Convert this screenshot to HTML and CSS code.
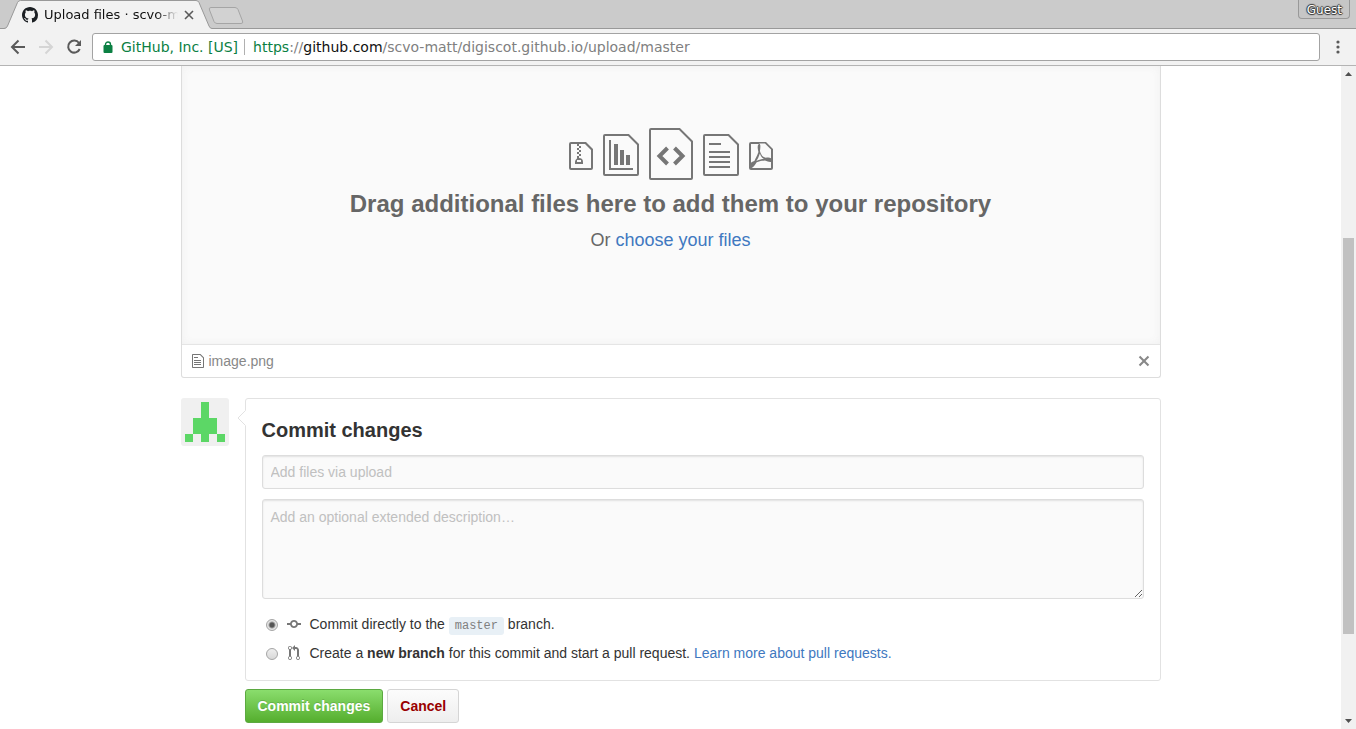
FILE: index.html
```html
<!DOCTYPE html>
<html lang="en">
<head>
<meta charset="utf-8">
<title>Upload files · scvo-matt</title>
<link rel="stylesheet" href="styles.css">
</head>
<body>
<header class="tabstrip">
  <svg class="tab-shapes" width="250" height="29" viewBox="0 0 250 29" aria-hidden="true">
    <path d="M0 28.500H4.500Q6.500 28.500 7.500 26L17.500 2.500Q18.500.500 20.500.500H196Q198 .500 199 2.500L209 26Q210 28.500 212 28.500H250V30H0z" fill="#f2f2f2"/>
    <path d="M0 28.500H4Q6.500 28.500 7.500 26L17.500 2.500Q18.500.500 20.500.500H196Q198 .500 199 2.500L209 26Q210 28.500 212 28.500H250" fill="none" stroke="#999"/>
    <path d="M211 7.500H235Q237 7.500 238 9.500L242.500 21Q243.500 23.500 241 23.500H217Q215 23.500 214 21.500L209.500 10Q208.500 7.500 211 7.500z" fill="#d2d2d2" stroke="#a5a5a5"/>
  </svg>
  <div class="tab">
    <svg width="16" height="16" viewBox="0 0 16 16" fill="#1b1f23" aria-hidden="true"><path d="M8 0C3.580 0 0 3.580 0 8c0 3.540 2.290 6.530 5.470 7.590.4.070.550-.170.550-.380 0-.190-.010-.820-.010-1.490-2.010.370-2.530-.490-2.690-.940-.090-.230-.480-.940-.820-1.130-.280-.150-.680-.520-.010-.530.630-.010 1.080.580 1.230.820.720 1.210 1.870.870 2.330.660.070-.520.280-.870.510-1.070-1.780-.2-3.640-.890-3.640-3.950 0-.870.310-1.590.820-2.150-.080-.2-.360-1.020.080-2.120 0 0 .670-.210 2.200.820.640-.180 1.320-.270 2-.270s1.360.090 2 .270c1.530-1.040 2.200-.820 2.200-.820.440 1.100.160 1.920.080 2.120.510.560.820 1.270.820 2.150 0 3.070-1.870 3.750-3.650 3.950.290.250.540.730.540 1.480 0 1.070-.010 1.930-.010 2.200 0 .210.150.460.550.380A8.010 8.010 0 0 0 16 8c0-4.420-3.580-8-8-8z"/></svg>
    <span class="tab-title">Upload files · scvo-m</span>
    <button class="plain tab-close" type="button" aria-label="Close tab"><svg width="10" height="10" viewBox="0 0 10 10"><path d="M1 1l8 8M9 1L1 9" stroke="#5a5a5a" stroke-width="1.600"/></svg></button>
  </div>
  <button class="guest" type="button">Guest</button>
</header>
<nav class="toolbar" aria-label="Browser">
  <button class="plain nav-button" type="button" aria-label="Back"><svg width="16" height="16" viewBox="0 0 16 16" fill="none" stroke="#5a5a5a" stroke-width="2"><path d="M15 8H2.500M8.500 1.500L2 8l6.500 6.500"/></svg></button>
  <button class="plain nav-button" type="button" aria-label="Forward"><svg width="16" height="16" viewBox="0 0 16 16" fill="none" stroke="#d5d5d5" stroke-width="2"><path d="M1 8h12.500M7.500 1.500L14 8l-6.500 6.500"/></svg></button>
  <button class="plain nav-button" type="button" aria-label="Reload"><svg width="16" height="16" viewBox="0 0 16 16" fill="none"><path d="M13 4A6 6 0 1 0 13.700 10" stroke="#5a5a5a" stroke-width="2"/><path d="M15 1v6H9z" fill="#5a5a5a"/></svg></button>
  <div class="address">
    <svg width="10" height="12" viewBox="0 0 10 12" aria-hidden="true"><rect x="0.500" y="4" width="9" height="8" rx="1" fill="#0b8043"/><path d="M2.500 5V3.500a2.500 2.500 0 0 1 5 0V5" fill="none" stroke="#0b8043" stroke-width="1.400"/></svg>
    <span class="issuer">GitHub, Inc. [US]</span>
    <span class="url"><span class="secure">https</span>://<span class="host">github.com</span>/scvo-matt/digiscot.github.io/upload/master</span>
  </div>
  <button class="plain menu" type="button" aria-label="Menu"><svg width="4" height="14" viewBox="0 0 4 14" fill="#5a5a5a"><circle cx="2" cy="2" r="1.600"/><circle cx="2" cy="7" r="1.600"/><circle cx="2" cy="12" r="1.600"/></svg></button>
</nav>
<div class="viewport">
  <main class="page">
    <div class="container">
      <section class="upload">
        <div class="dropzone">
          <div class="file-icons" aria-hidden="true">
            <svg class="small" width="24" height="28" viewBox="0 1 12 14"><path d="M8.500 1H1a1 1 0 0 0-1 1v12a1 1 0 0 0 1 1h10a1 1 0 0 0 1-1V4.500L8.500 1zM11 14H1V2h3v1h1V2h3l3 3v9zM5 4V3h1v1H5zM4 4h1v1H4V4zm1 2V5h1v1H5zM4 6h1v1H4V6zm1 2V7h1v1H5zM4 9.280A2 2 0 0 0 3 11v1h4v-1a2 2 0 0 0-2-2V8H4v1.280zM6 10v1H4v-1h2z"/></svg>
            <svg class="medium" width="36" height="42" viewBox="0 0 36 42"><path d="M2 1H25.500L35 10.500V40q0 1-1 1H2q-1 0-1-1V2q0-1 1-1z" fill="none" stroke="#767676" stroke-width="2"/><path d="M6 6h2v28h22v2H6zM11 10h4v21h-4zM17 16h4v15h-4zM23 21h4v10h-4z"/></svg>
            <svg width="44" height="52" viewBox="0 0 44 52"><path d="M2 1H30.500L43 13.500V50q0 1-1 1H2q-1 0-1-1V2q0-1 1-1z" fill="none" stroke="#767676" stroke-width="2"/><path d="M18.500 20l-8 8 8 8M25.500 20l8 8-8 8" fill="none" stroke="#767676" stroke-width="4"/></svg>
            <svg class="medium" width="36" height="42" viewBox="0 0 36 42"><path d="M2 1H25.500L35 10.500V40q0 1-1 1H2q-1 0-1-1V2q0-1 1-1z" fill="none" stroke="#767676" stroke-width="2"/><path d="M6 9h12v2H6zM6 17h21v2H6zM6 22h21v2H6zM6 27h21v2H6zM6 32h21v2H6z"/></svg>
            <svg class="small" width="24" height="28" viewBox="0 1 12 14"><path d="M8.500 1H1a1 1 0 0 0-1 1v12a1 1 0 0 0 1 1h10a1 1 0 0 0 1-1V4.500L8.500 1zM1 2h4a.680.680 0 0 0-.310.200 1.080 1.080 0 0 0-.230.470 4.220 4.220 0 0 0-.090 1.470c.060.609.173 1.211.340 1.800A21.780 21.780 0 0 1 3.600 8.600c-.5 1-.8 1.660-.910 1.840a7.161 7.161 0 0 0-.690.300 4.190 4.190 0 0 0-1 .640V2zm4.420 4.800a5.650 5.650 0 0 0 1.170 2.090c.275.237.595.417.940.530-.640.090-1.230.200-1.810.330-.618.150-1.223.347-1.810.590s.220-.440.610-1.250c.365-.740.670-1.510.910-2.300l-.010.010zM11 14H1.500a.743.743 0 0 1-.170 0 2.120 2.120 0 0 0 .730-.440 10.140 10.140 0 0 0 1.780-2.380c.310-.130.580-.230.810-.310l.420-.140c.450-.130.940-.230 1.440-.330s1-.160 1.480-.200a8.650 8.650 0 0 0 1.390.530c.403.110.814.188 1.230.230h.380V14H11zm0-4.860a3.740 3.740 0 0 0-.640-.280 4.220 4.220 0 0 0-.750-.110c-.411.003-.822.030-1.230.080a3 3 0 0 1-1.840-1 6.070 6.070 0 0 1-1.080-2.330c.122-.610.192-1.229.210-1.850.020-.275.020-.550 0-.830a1.440 1.440 0 0 0-.200-.750.700.700 0 0 0-.460-.300H8l3 3v4.140z"/></svg>
          </div>
          <h2 class="drop-title">Drag additional files here to add them to your repository</h2>
          <p class="drop-hint">Or <a href="#">choose your files</a></p>
        </div>
        <div class="file-row">
          <svg width="12" height="16" viewBox="0 0 12 16" fill="#767676" aria-hidden="true"><path d="M6 5H2V4h4v1zM2 8h7V7H2v1zm0 2h7V9H2v1zm0 2h7v-1H2v1zm10-7.500V14c0 .550-.450 1-1 1H1c-.550 0-1-.450-1-1V2c0-.550.450-1 1-1h7.500L12 4.500zM11 5L8 2H1v12h10V5z"/></svg>
          <span class="file-name">image.png</span>
          <button class="plain" type="button" aria-label="Remove file"><svg width="12" height="16" viewBox="0 0 12 16" fill="#888"><path d="M7.480 8l3.750 3.750-1.480 1.480L6 9.480l-3.750 3.750-1.480-1.480L4.520 8 .770 4.250l1.480-1.480L6 6.520l3.750-3.750 1.480 1.480z"/></svg></button>
        </div>
      </section>
      <form class="commit">
        <svg class="avatar" width="48" height="48" viewBox="0 0 48 48" aria-hidden="true"><rect width="48" height="48" fill="#f0f0f0"/><path d="M20 4h8v16h8v16h8v8h-8v-8h-8v8h-8v-8h-8v8H4v-8h8V20h8z" fill="#5cd766"/></svg>
        <div class="commit-body">
          <div class="commit-box">
            <svg class="caret" width="9" height="16" viewBox="0 0 9 16" aria-hidden="true"><path d="M9 0L1 8l8 8z" fill="#fff"/><path d="M8.500 0.500L1 8l7.500 7.500" fill="none" stroke="#e2e2e2"/></svg>
            <h3 class="commit-title">Commit changes</h3>
            <input class="field" type="text" aria-label="Commit summary" placeholder="Add files via upload">
            <textarea class="field description" aria-label="Extended description" placeholder="Add an optional extended description…"></textarea>
            <div class="choice">
              <input class="radio" type="radio" name="target" id="direct" checked>
              <svg width="14" height="16" viewBox="0 0 14 16" fill="#767676" aria-hidden="true"><path d="M10.860 7c-.450-1.720-2-3-3.860-3-1.860 0-3.410 1.280-3.860 3H0v2h3.140c.450 1.720 2 3 3.860 3 1.860 0 3.410-1.280 3.860-3H14V7h-3.140zM7 10.200c-1.220 0-2.200-.980-2.200-2.200 0-1.220.980-2.200 2.200-2.200 1.220 0 2.200.980 2.200 2.200 0 1.220-.980 2.200-2.200 2.200z"/></svg>
              <label for="direct">Commit directly to the <code class="branch">master</code> branch.</label>
            </div>
            <div class="choice">
              <input class="radio" type="radio" name="target" id="pull">
              <svg width="14" height="16" viewBox="-1 0 14 16" fill="#767676" aria-hidden="true"><path d="M11 11.280V5c-.030-.780-.340-1.470-.940-2.060C9.460 2.350 8.780 2.030 8 2H7V0L4 3l3 3V4h1c.270.020.480.110.690.310.210.200.300.420.310.690v6.280A1.993 1.993 0 0 0 10 15a1.993 1.993 0 0 0 1-3.720zm-1 2.920c-.660 0-1.200-.550-1.200-1.200 0-.650.550-1.200 1.200-1.200.650 0 1.200.550 1.200 1.200 0 .650-.550 1.200-1.200 1.200zM4 3c0-1.110-.890-2-2-2a1.993 1.993 0 0 0-1 3.720v6.560A1.993 1.993 0 0 0 2 15a1.993 1.993 0 0 0 1-3.720V4.720c.590-.340 1-.980 1-1.720zm-.8 10c0 .660-.550 1.200-1.200 1.200-.650 0-1.200-.550-1.200-1.200 0-.650.550-1.200 1.200-1.200.650 0 1.200.550 1.200 1.200zM2 4.200C1.340 4.200.8 3.650.8 3c0-.650.550-1.200 1.200-1.200.650 0 1.200.550 1.200 1.200 0 .650-.550 1.200-1.200 1.200z"/></svg>
              <label for="pull">Create a <strong>new branch</strong> for this commit and start a pull request. <a href="#">Learn more about pull requests.</a></label>
            </div>
          </div>
          <div class="actions">
            <button class="button primary" type="submit">Commit changes</button>
            <button class="button danger" type="button">Cancel</button>
          </div>
        </div>
      </form>
    </div>
  </main>
  <div class="scrollbar" aria-hidden="true">
    <svg width="15" height="15" viewBox="0 0 15 15"><path d="M4 10h7L7.500 6z" fill="#505050"/></svg>
    <div class="track"><div class="thumb"></div></div>
    <svg width="15" height="15" viewBox="0 0 15 15"><path d="M4 5h7L7.500 9z" fill="#505050"/></svg>
  </div>
</div>
</body>
</html>
```

FILE: styles.css
```css
* {
  box-sizing: border-box;
}

body {
  margin: 0;
  height: 100vh;
  display: flex;
  flex-direction: column;
  overflow: hidden;
  background: #fff;
  color: #333;
  font: 14px/21px "Liberation Sans", Arial, sans-serif;
}

svg {
  display: block;
  flex: none;
}

a {
  color: #4078c0;
  text-decoration: none;
}

.plain {
  padding: 0;
  border: 0;
  background: none;
}

.tabstrip {
  position: relative;
  flex: none;
  display: flex;
  justify-content: space-between;
  align-items: flex-start;
  height: 29px;
  padding: 0 6px 0 22px;
  border-bottom: 1px solid #999;
  background: #cbcbcb;
  font-family: "DejaVu Sans", sans-serif;
}

.tab-shapes {
  position: absolute;
  top: 0;
  left: 0;
}

.tab {
  position: relative;
  display: flex;
  align-items: center;
  gap: 6px;
  height: 30px;
}

.tab-title {
  margin-right: -2px;
  color: #111;
  font-size: 13px;
  line-height: 20px;
  white-space: nowrap;
  -webkit-mask-image: linear-gradient(90deg, #000 112px, transparent 134px);
  mask-image: linear-gradient(90deg, #000 112px, transparent 134px);
}

.guest {
  height: 19px;
  padding: 3px 8px 0;
  padding-right: 7px;
  border: 1px solid #999;
  border-top: 0;
  border-radius: 0 0 4px 4px;
  background: #c6c6c6;
  color: #fff;
  font: 12px/15px "DejaVu Sans", sans-serif;
  text-shadow: 1px 0 1px #333, -1px 0 1px #333, 0 1px 1px #333, 0 -1px 1px #333;
}

.toolbar {
  flex: none;
  display: flex;
  align-items: center;
  gap: 12px;
  height: 37px;
  padding: 0 16px 0 10px;
  border-bottom: 1px solid #b4b4b4;
  background: #f2f2f2;
}

.address {
  flex: 1;
  display: flex;
  align-items: center;
  gap: 8px;
  height: 28px;
  margin: 0 4px 0 -2px;
  padding: 0 10px;
  border: 1px solid #a3a3a3;
  border-radius: 3px;
  background: #fff;
  color: #808080;
  font: 14px/16px "DejaVu Sans", sans-serif;
  white-space: nowrap;
}

.issuer {
  padding-right: 6px;
  border-right: 1px solid #b0b0b0;
}

.issuer,
.secure {
  color: #0b8043;
}

.host {
  color: #111;
}

.viewport {
  flex: 1;
  display: flex;
  min-height: 0;
}

.page {
  flex: 1;
  overflow: hidden;
}

.container {
  max-width: 980px;
  margin: 0 auto;
}

.upload {
  margin-bottom: 20px;
  border: 1px solid #ddd;
  border-top: 0;
  border-radius: 0 0 3px 3px;
}

.dropzone {
  padding: 62px 16px 90px;
  border-bottom: 1px solid #e5e5e5;
  background: #fafafa;
  box-shadow: inset 0 0 8px #f0f0f0;
  color: #666;
  text-align: center;
}

.file-icons {
  display: flex;
  justify-content: center;
  align-items: center;
  gap: 10px;
  margin-bottom: 8px;
  fill: #767676;
}

.file-icons .small {
  margin-top: 4px;
}

.file-icons .medium {
  margin-top: 2px;
}

.drop-title {
  margin: 0 0 6px;
  font-size: 24px;
  line-height: 32px;
}

.drop-hint {
  margin: 0;
  font-size: 18px;
  line-height: 28px;
}

.file-row {
  display: flex;
  align-items: center;
  gap: 5px;
  padding: 6px 10px;
  line-height: 20px;
}

.file-name {
  flex: 1;
  color: #888;
}

.commit {
  display: flex;
  align-items: flex-start;
  gap: 16px;
}

.avatar {
  border-radius: 3px;
}

.commit-body {
  flex: 1;
}

.commit-box {
  position: relative;
  padding: 16px;
  border: 1px solid #e2e2e2;
  border-radius: 3px;
}

.caret {
  position: absolute;
  top: 11px;
  left: -9px;
}

.commit-title {
  margin: 0 0 10px;
  font-size: 20px;
  line-height: 30px;
}

.field {
  display: block;
  width: 100%;
  height: 34px;
  margin: 0 0 10px;
  padding: 6px 8px;
  border: 1px solid #ddd;
  border-radius: 3px;
  background: #fafafa;
  box-shadow: inset 0 1px 2px rgba(0, 0, 0, 0.1);
  color: #333;
  font: 14px/20px "Liberation Sans", Arial, sans-serif;
}

.field::placeholder {
  color: #c0c0c0;
}

.description {
  height: 100px;
  margin-bottom: 14px;
  padding-top: 7px;
  resize: vertical;
}

.choice {
  display: flex;
  align-items: flex-start;
  padding: 1px 4px 0;
  margin-bottom: 7px;
}

.choice:last-child {
  margin-bottom: 0;
}

.choice svg {
  margin: 2px 8px 0;
}

.choice label {
  padding-left: 1px;
}

.radio {
  appearance: none;
  flex: none;
  width: 12px;
  height: 12px;
  margin: 5px 1px 0 0;
  border: 1px solid #a5a5a5;
  border-radius: 50%;
  background: linear-gradient(#eee, #d8d8d8);
}

.radio:checked {
  background: radial-gradient(circle, #555 0 2px, #e4e4e4 4px);
}

.branch {
  display: inline-block;
  padding: 0 6px;
  border-radius: 3px;
  background: #e8f0f6;
  color: #808080;
  font: 12px/18px "Liberation Mono", monospace;
}

.actions {
  display: flex;
  gap: 4px;
  padding-top: 8px;
}

.button {
  padding: 6px 12px;
  border: 1px solid #d5d5d5;
  border-radius: 3px;
  background: linear-gradient(#fcfcfc, #eee);
  font: bold 14px/20px "Liberation Sans", Arial, sans-serif;
}

.primary {
  border-color: #5ca941;
  background: linear-gradient(#8add6d, #55ae2e);
  color: #fff;
  text-shadow: 0 -1px 0 rgba(0, 0, 0, 0.15);
}

.danger {
  color: #900;
}

.scrollbar {
  flex: none;
  display: flex;
  flex-direction: column;
  width: 15px;
  background: #f1f1f1;
}

.track {
  flex: 1;
  display: grid;
  grid-template-rows: 157fr 396fr 80fr;
  padding: 0 2px;
}

.thumb {
  grid-row: 2;
  background: #c1c1c1;
}
```
